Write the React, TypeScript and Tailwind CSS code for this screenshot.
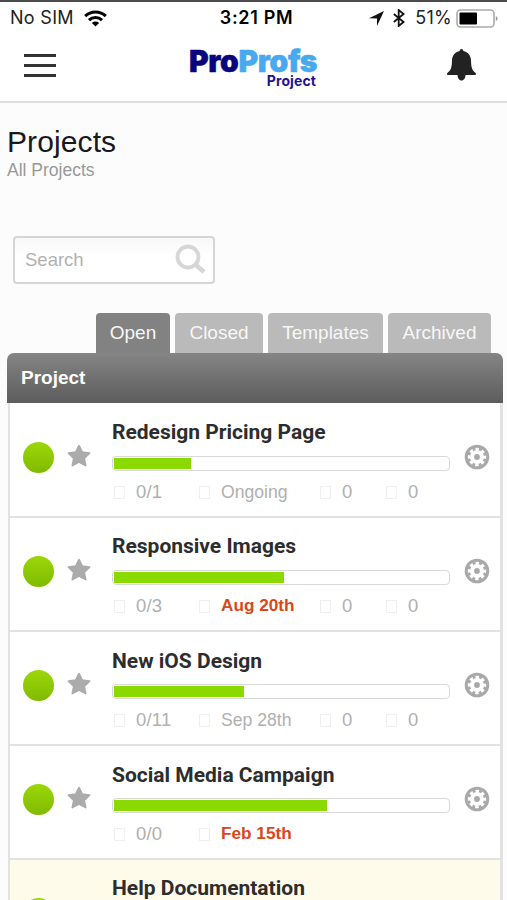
import React from "react";

type Project = {
  name: string;
  nameClass: string;
  progress: number;
  tasks: string;
  due: string;
  overdue?: boolean;
  counts: boolean;
  highlighted?: boolean;
};

const projects: Project[] = [
  { name: "Redesign Pricing Page", nameClass: "mt-[15px] mb-[11px]", progress: 77, tasks: "0/1", due: "Ongoing", counts: true },
  { name: "Responsive Images", nameClass: "mt-[15px] mb-[11px]", progress: 170, tasks: "0/3", due: "Aug 20th", overdue: true, counts: true },
  { name: "New iOS Design", nameClass: "mt-[16px] mb-[10px]", progress: 130, tasks: "0/11", due: "Sep 28th", counts: true },
  { name: "Social Media Campaign", nameClass: "mt-[16px] mb-[10px]", progress: 213, tasks: "0/0", due: "Feb 15th", overdue: true, counts: false },
  { name: "Help Documentation", nameClass: "mt-[15px] mb-[11px]", progress: 150, tasks: "", due: "", counts: false, highlighted: true },
];

function StatusBar() {
  return (
    <div className="grid h-[34px] grid-cols-3 items-center border-t-2 border-[#4b4a4d] pl-[10px] pr-[9px] text-[#222] font-['Inter',sans-serif]">
      <div className="flex items-center gap-[10px]">
        <span className="text-[18px] leading-none tracking-[0.3px]">No SIM</span>
        <svg width="23" height="17" viewBox="0 0 23 17" fill="none" stroke="#000" strokeWidth="3">
          <path d="M1.200 6.100a15 15 0 0 1 20.600 0" />
          <path d="M5 10.200a9.400 9.400 0 0 1 13 0" />
          <path d="M11.500 16.500 7.900 12.900a5.100 5.100 0 0 1 7.200 0Z" fill="#000" stroke="none" />
        </svg>
      </div>
      <span className="pl-[5px] text-center text-[18px] font-semibold leading-none tracking-[0.650px] text-black">3:21 PM</span>
      <div className="flex items-center justify-end">
        <svg width="15" height="15" viewBox="0 0 15 15" className="mr-[9px]">
          <path d="M15 0 8 15V7.400L0 7.200Z" fill="#111" />
        </svg>
        <svg width="12" height="18" viewBox="0 0 12 18" fill="none" stroke="#111" strokeWidth="1.800" className="mr-[10px]">
          <path d="m.8 5 9.800 8-4.900 4V1l4.900 4-9.800 8" />
        </svg>
        <span className="mr-[4px] text-[18px] leading-none tracking-[0.300px]">51%</span>
        <svg width="42" height="19" viewBox="0 0 42 19">
          <rect x="1" y="1" width="37" height="17" rx="3.500" fill="#fff" stroke="#aaa" strokeWidth="1.600" />
          <rect x="3.500" y="3.500" width="17.500" height="12" rx="1" fill="#000" />
          <path d="M39.800 7v5.200q1.800-.8 1.800-2.600T39.800 7Z" fill="#999" />
        </svg>
      </div>
    </div>
  );
}

function Header() {
  return (
    <header className="flex h-[69px] items-start justify-between border-b-2 border-[#dedede] pl-[24px] pr-[31px]">
      <div className="mt-[20px] flex w-8 flex-col gap-[7px]">
        <span className="h-[3px] bg-[#333]" />
        <span className="h-[3px] bg-[#333]" />
        <span className="h-[3px] bg-[#333]" />
      </div>
      <div className="ml-[4px] mt-[13px] flex w-[129px] flex-col font-['Inter',sans-serif]">
        <span className="h-[26px] whitespace-nowrap text-[30px] font-black leading-[28px] tracking-[-0.350px] text-[#0a047d] [-webkit-text-stroke:0.500px]">
          Pro<span className="text-[#48a9ef]">Profs</span>
        </span>
        <span className="pr-[2px] text-right text-[14px] font-bold leading-[16px] tracking-[0.100px] text-[#21148c]">Project</span>
      </div>
      <svg width="29" height="33" viewBox="0 0 29 33" className="mt-[15px]" fill="#222">
        <path d="M14.500 0c1.100 0 1.800.8 1.800 2 4.700 1 7.500 4.400 7.700 9.300.2 6.700.7 9.700 4.600 12.700.8.800.3 2-.8 2H1.200C.1 26-.4 24.800.4 24c3.900-3 4.400-6 4.600-12.700C5.200 6.400 8 3 12.700 2c0-1.200.7-2 1.800-2Z" />
        <path d="M10.500 26h8c0 3-1.700 5.500-4 5.500s-4-2.500-4-5.500Z" />
      </svg>
    </header>
  );
}

function Meta({ children, className = "" }: { children: React.ReactNode; className?: string }) {
  return (
    <span className={`flex items-center gap-[11px] whitespace-nowrap ${className}`}>
      <span className="h-[13px] w-[11px] shrink-0 border border-[#efefef]" />
      {children}
    </span>
  );
}

function Gear() {
  return (
    <svg width="26" height="26" viewBox="0 0 26 26" className="ml-[13.500px] mt-[40px]">
      <circle cx="13" cy="13" r="12.300" fill="#a9a9a9" />
      <circle cx="13" cy="13" r="7" fill="#fff" />
      <circle cx="13" cy="13" r="7.700" fill="none" stroke="#fff" strokeWidth="3" strokeDasharray="3.300 2.748" strokeDashoffset="1.650" />
      <circle cx="13" cy="13" r="2.900" fill="#a9a9a9" />
    </svg>
  );
}

function ProjectRow({ project }: { project: Project }) {
  return (
    <div className={`flex h-[114px] items-start border-b-2 border-[#e2e2e2] pl-[13px] ${project.highlighted ? "bg-[#fffbea]" : "bg-white"}`}>
      <span className="mt-[38px] size-[31px] shrink-0 rounded-full bg-linear-to-b from-[#9bd808] to-[#80ba02]" />
      <svg width="24" height="24" viewBox="0 0 24 24" className="ml-[13px] mt-[40px] shrink-0">
        <path d="m12 1.700 3.200 6.500 7.300.9-5.300 5.200 1.400 7.200-6.600-3.500-6.600 3.500 1.400-7.200L1.500 9.100l7.300-.9Z" fill="#ababab" stroke="#ababab" strokeWidth="1.800" strokeLinejoin="round" />
      </svg>
      <div className="ml-[21px] w-[338px] shrink-0">
        <h2 className={`h-[26px] whitespace-nowrap text-[21px] font-bold leading-[26px] text-[#2d2d2d] font-['Roboto',sans-serif] ${project.nameClass}`}>{project.name}</h2>
        <div className="h-[15px] rounded-[4px] border-[1.500px] border-[#d9d9d9] bg-white p-px">
          <div className="h-[11px] bg-[#8ada00]" style={{ width: project.progress }} />
        </div>
        {project.tasks && (
          <div className="mt-[9px] flex h-6 items-center pl-[2px] text-[18.500px] text-[#b0b0b0]">
            <Meta className="w-[85px] tracking-[0.200px]">{project.tasks}</Meta>
            <Meta className="w-[121px]">
              <span className={project.overdue ? "text-[17.200px] font-bold text-[#d9481b]" : "text-[17.600px]"}>{project.due}</span>
            </Meta>
            {project.counts && <Meta className="w-[66px]">0</Meta>}
            {project.counts && <Meta>0</Meta>}
          </div>
        )}
      </div>
      <Gear />
    </div>
  );
}

const tabs = [
  { label: "Open", className: "w-[74px] bg-[#828282]" },
  { label: "Closed", className: "w-[88px] bg-[#bababa]" },
  { label: "Templates", className: "w-[115px] bg-[#bababa]" },
  { label: "Archived", className: "w-[103px] bg-[#bababa]" },
];

export default function App() {
  return (
    <div className="h-[900px] w-[507px] overflow-hidden bg-[#fcfcfc] font-['Liberation_Sans',Arial,sans-serif]">
      <div className="bg-white">
        <StatusBar />
        <Header />
      </div>
      <div className="px-[7px] pt-[22px]">
        <h1 className="text-[30px] leading-[34px] tracking-[0.100px] text-[#191919]">Projects</h1>
        <p className="text-[17.500px] leading-[22px] text-[#999]">All Projects</p>
      </div>
      <div className="ml-[13px] mt-[55px] flex h-12 w-[202px] items-center justify-between rounded-[4px] border-2 border-[#d5d5d5] bg-linear-to-b from-[#f8f8f8] to-white to-40% pl-[10px] pr-[7px]">
        <span className="text-[18.500px] text-[#b2b2b2]">Search</span>
        <svg width="32" height="32" viewBox="0 0 32 32" fill="none" stroke="#d6d6d6" className="-mt-[3px]">
          <circle cx="14" cy="14" r="10.500" strokeWidth="3.800" />
          <path d="m22 22 8 7" strokeWidth="4.500" />
        </svg>
      </div>
      <div className="ml-[96px] mt-[29px] flex h-10 gap-[5px]">
        {tabs.map((tab) => (
          <div key={tab.label} className={`flex items-center justify-center rounded-t-[4px] pt-px text-[19px] text-[#f7f7f7] ${tab.className}`}>{tab.label}</div>
        ))}
      </div>
      <div className="ml-[7px] flex h-[50px] w-[496px] items-center rounded-t-[7px] bg-linear-to-b from-[#858585] to-[#5d5d5d] pl-[14px] text-[19px] font-bold text-white">Project</div>
      <div className="ml-2 w-[495px] border-l-2 border-r-[3px] border-[#e2e2e2] bg-white pt-px">
        {projects.map((project) => (
          <ProjectRow key={project.name} project={project} />
        ))}
      </div>
    </div>
  );
}
